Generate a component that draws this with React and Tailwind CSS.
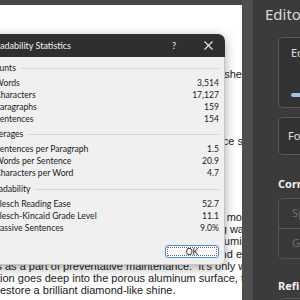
import React from "react";

function RLine({ children, cut = "" }) {
  return (
    <div className="flex justify-end overflow-hidden whitespace-nowrap h-[12.25px]">
      <span className={"shrink-0 " + cut}>{children}</span>
    </div>
  );
}

function LLine({ children, shift = "" }) {
  return (
    <div className="overflow-hidden whitespace-nowrap h-[12.25px]">
      <span className={"block " + shift}>{children}</span>
    </div>
  );
}

function Heading({ children, className = "" }) {
  return (
    <div className={"flex items-center h-[12px] " + className}>
      <span className="whitespace-nowrap">{children}</span>
      <div className="flex-1 h-px bg-[#d6d6d6] ml-[5px]" />
    </div>
  );
}

function Row({ label, value }) {
  return (
    <div className="flex justify-between items-center h-[12px] pl-[6px] whitespace-nowrap">
      <span>{label}</span>
      <span>{value}</span>
    </div>
  );
}

export default function App() {
  return (
    <div className="relative w-[300px] h-[300px] overflow-hidden flex bg-[#3b3b3b]">
      {/* document column */}
      <div className="w-[242px] flex flex-col shrink-0">
        <div className="h-[5px] bg-[#474747] shrink-0" />
        <div className="flex-1 bg-white overflow-hidden font-['Liberation_Sans',Arial,sans-serif] text-[11px] leading-[12.25px] text-[#1b1b1b] pt-[63px]">
          <RLine cut="mr-[-6px]">and keep it polished</RLine>
          <div className="mt-[54.75px]">
            <RLine cut="mr-[-1px]">on the surface s</RLine>
          </div>
          <div className="mt-[63.5px]">
            <RLine>and looks mo</RLine>
            <RLine cut="mr-[-2px]">polishing wa</RLine>
            <RLine cut="mr-[-21px]">the aluminum</RLine>
            <RLine>and e</RLine>
            <LLine shift="ml-[-3.6px]">s as a part of preventative maintenance.{"\u00a0"} It’s only when</LLine>
            <LLine shift="ml-[-3px]">tion goes deep into the porous aluminum surface, to</LLine>
            <LLine shift="ml-[-3.7px]">restore a brilliant diamond-like shine.</LLine>
          </div>
        </div>
      </div>

      {/* strip between page and pane */}
      <div className="w-[12px] shrink-0 bg-[#4e4e4e] border-r border-[#363636]" />

      {/* Editor pane */}
      <div className="flex-1 min-w-0 overflow-hidden pl-[11px] pt-[4px] font-['Noto_Sans',sans-serif]">
        <div className="text-[15px] leading-[20px] text-[#d8d8d8] whitespace-nowrap">Editor</div>
        <div className="ml-[13px] w-[120px]">
          <div className="mt-[13px] h-[71px] rounded-[5px] border border-[#5a5a5a] bg-[#323232] pl-[12px] pt-[8px]">
            <div className="text-[11px] leading-[14px] text-[#e2e2e2] whitespace-nowrap">Editor Score</div>
            <div className="mt-[33px] h-[4px] w-[60px] rounded-full bg-[#9ec3ea]" />
          </div>
          <div className="mt-[9px] h-[38px] rounded-[5px] border border-[#5a5a5a] bg-[#323232] pl-[9px] pt-[11px]">
            <div className="text-[11px] leading-[14px] text-[#e2e2e2] whitespace-nowrap">Formality</div>
          </div>
          <div className="mt-[22px] text-[11px] leading-[14px] font-bold text-[#f0f0f0] whitespace-nowrap">Corrections</div>
          <div className="mt-[7px] rounded-[5px] border border-[#555] bg-[#383838] flex flex-col">
            <div className="h-[30px] flex items-center pl-[13px] text-[11px] text-[#6f6f6f] border-b border-[#555] whitespace-nowrap">Spelling</div>
            <div className="h-[29px] flex items-center pl-[13px] text-[11px] text-[#6f6f6f] whitespace-nowrap">Grammar</div>
          </div>
          <div className="mt-[20px] text-[11px] leading-[14px] font-bold text-[#f0f0f0] whitespace-nowrap">Refinements</div>
          <div className="mt-[5px] h-[30px] rounded-[5px] border border-[#555] bg-[#383838]" />
        </div>
      </div>

      {/* Readability Statistics dialog */}
      <div className="absolute left-[-20px] top-[34px] w-[245px] rounded-tr-[7px] rounded-br-[5px] shadow-[0_3px_12px_rgba(0,0,0,0.35)] font-['Lato',sans-serif]">
        <div className="h-[23px] bg-[#2f2f2f] rounded-tr-[7px] flex items-center pl-[10px] text-[9px] text-[#f2f2f2]">
          <span className="whitespace-nowrap">Readability Statistics</span>
          <div className="ml-auto flex">
            <div className="w-[34px] flex items-center justify-center text-[10px] text-[#e8e8e8]">?</div>
            <div className="w-[34px] flex items-center justify-center">
              <svg width="9" height="9" viewBox="0 0 9 9" fill="none" stroke="#e6e6e6" strokeWidth="1.1">
                <path d="M0.5 0.5 L8.5 8.5 M8.5 0.5 L0.5 8.5" />
              </svg>
            </div>
          </div>
        </div>
        <div className="bg-[#f0f0f0] border-r border-b border-[#c4c4c4] rounded-br-[5px] pl-[9px] pr-[5px] pt-[5px] pb-[6px] text-[8.6px] leading-[12px] text-[#1a1a1a]">
          <Heading className="mb-[3px]">Counts</Heading>
          <Row label="Words" value="3,514" />
          <Row label="Characters" value="17,127" />
          <Row label="Paragraphs" value="159" />
          <Row label="Sentences" value="154" />
          <Heading className="mt-[3px] mb-[3px]">Averages</Heading>
          <Row label="Sentences per Paragraph" value="1.5" />
          <Row label="Words per Sentence" value="20.9" />
          <Row label="Characters per Word" value="4.7" />
          <Heading className="mt-[4px] mb-[3px]">Readability</Heading>
          <Row label="Flesch Reading Ease" value="52.7" />
          <Row label="Flesch-Kincaid Grade Level" value="11.1" />
          <Row label="Passive Sentences" value="9.0%" />
          <div className="mt-[11px] flex justify-end">
            <button className="relative w-[54px] h-[13px] border border-[#4a90d9] rounded-[3px] bg-[#fdfdfd] flex items-center justify-center text-[8.6px] text-[#1a1a1a]">
              <span className="absolute inset-[1px] border border-dotted border-[#6b6b6b] rounded-[1px]" />
              OK
            </button>
          </div>
        </div>
      </div>
    </div>
  );
}
